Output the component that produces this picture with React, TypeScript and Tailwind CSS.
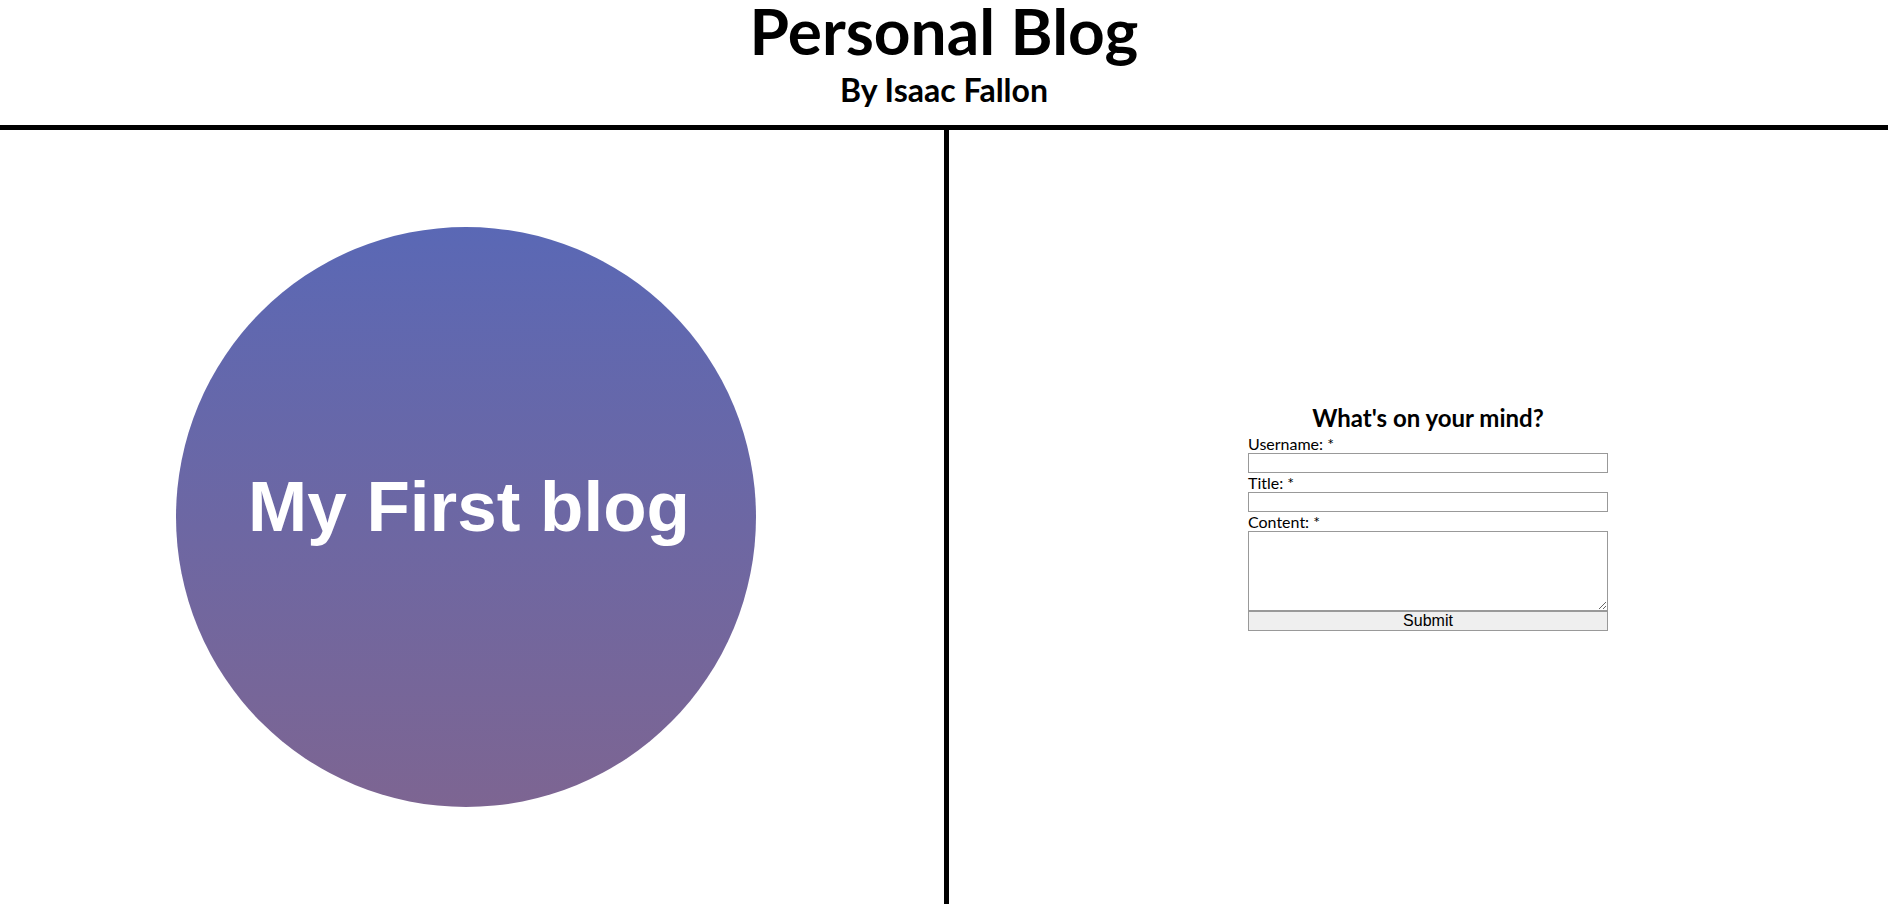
import { useState } from 'react';

export default function App() {
  const [form, setForm] = useState({ username: '', title: '', content: '' });

  function handleChange(e: React.ChangeEvent<HTMLInputElement | HTMLTextAreaElement>) {
    const { name, value } = e.target;
    setForm((prev) => ({ ...prev, [name]: value }));
  }

  return (
    <div className="flex h-screen flex-col overflow-hidden bg-white font-['Lato',sans-serif] text-black">
      <header className="border-b-[5px] border-black pb-[16px] text-center">
        <h1 className="text-[64px] font-bold leading-[62px]">Personal Blog</h1>
        <h2 className="mt-[9px] text-[32px] font-bold leading-[38px]">By Isaac Fallon</h2>
      </header>

      <main className="flex min-h-0 flex-1">
        <section className="flex w-[949px] shrink-0 items-center justify-center border-r-[5px] border-black pr-[12px]">
          <div className="flex h-[580px] w-[580px] items-center justify-center rounded-full bg-gradient-to-b from-[#5a68b5] to-[#7d6592] pb-[20px] pl-[6px]">
            <h2 className="font-['Liberation_Sans',Arial,sans-serif] text-[71px] font-bold text-white">
              My First blog
            </h2>
          </div>
        </section>

        <section className="flex flex-1 items-center justify-center pl-[19px]">
          <form className="flex w-[360px] flex-col" onSubmit={(e) => e.preventDefault()}>
            <h3 className="mb-[3px] text-center text-[24px] font-bold leading-[27px]">What&apos;s on your mind?</h3>
            <label className="text-[16px] leading-[19px]">Username: *</label>
            <input
              type="text"
              name="username"
              value={form.username}
              onChange={handleChange}
              required
              className="block h-[20px] w-full border border-[#999] bg-white px-[2px] text-[13px]"
            />
            <label className="text-[16px] leading-[19px]">Title: *</label>
            <input
              type="text"
              name="title"
              value={form.title}
              onChange={handleChange}
              required
              className="block h-[20px] w-full border border-[#999] bg-white px-[2px] text-[13px]"
            />
            <label className="text-[16px] leading-[19px]">Content: *</label>
            <textarea
              name="content"
              value={form.content}
              onChange={handleChange}
              required
              className="block h-[80px] w-full border border-[#999] bg-white px-[2px] text-[13px]"
            />
            <button
              type="submit"
              className="block h-[20px] w-full border border-[#999] bg-[#efefef] font-['Liberation_Sans',Arial,sans-serif] text-[16px] leading-[18px] text-black"
            >
              Submit
            </button>
          </form>
        </section>
      </main>
    </div>
  );
}
